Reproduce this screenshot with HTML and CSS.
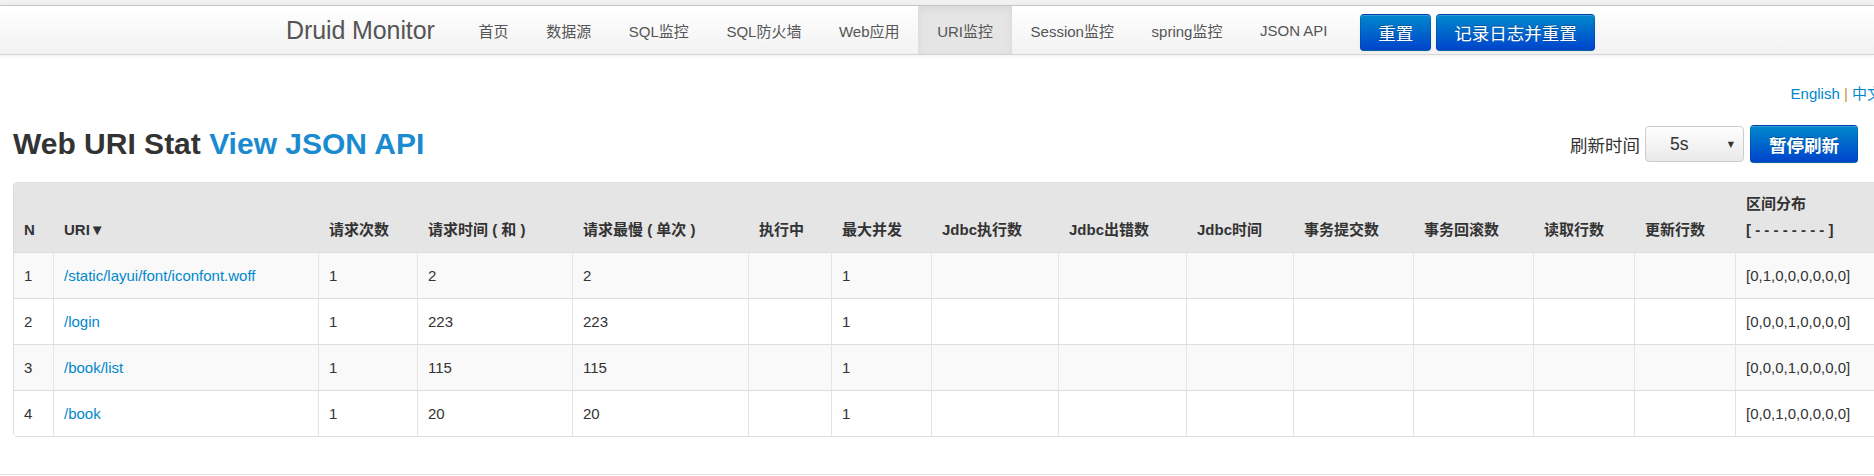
FILE: index.html
```html
<!DOCTYPE html>
<html lang="zh-CN">
<head>
<meta charset="utf-8">
<title>Druid Monitor - Web URI Stat</title>
<link rel="stylesheet" href="styles.css">
</head>
<body>
<div class="topstrip"></div>
<header class="navbar">
  <div class="nav-inner">
    <a class="brand" href="#">Druid Monitor</a>
    <nav class="nav">
      <a class="nav-link" href="#">首页</a>
      <a class="nav-link" href="#">数据源</a>
      <a class="nav-link" href="#">SQL监控</a>
      <a class="nav-link" href="#">SQL防火墙</a>
      <a class="nav-link" href="#">Web应用</a>
      <a class="nav-link active" href="#">URI监控</a>
      <a class="nav-link" href="#">Session监控</a>
      <a class="nav-link" href="#">spring监控</a>
      <a class="nav-link" href="#">JSON API</a>
    </nav>
    <div class="nav-buttons">
      <a class="btn btn-primary btn-nav" href="#">重置</a>
      <a class="btn btn-primary btn-nav" href="#">记录日志并重置</a>
    </div>
  </div>
</header>

<main class="main">
  <div class="lang"><a href="#">English</a> <span class="sep">|</span> <a href="#">中文</a></div>

  <div class="title-row">
    <h3 class="title">Web URI Stat <a href="#">View JSON API</a></h3>
    <div class="controls">
      <span class="label">刷新时间</span>
      <div class="select"><span class="select-value">5s</span><span class="select-arrow">▼</span></div>
      <a class="btn btn-primary btn-pause" href="#">暂停刷新</a>
    </div>
  </div>

  <table class="stat-table">
    <thead>
      <tr>
        <th class="c-n">N</th>
        <th class="c-uri">URI▼</th>
        <th class="c-req">请求次数</th>
        <th class="c-time">请求时间 ( 和 )</th>
        <th class="c-slow">请求最慢 ( 单次 )</th>
        <th class="c-run">执行中</th>
        <th class="c-conc">最大并发</th>
        <th class="c-jexec">Jdbc执行数</th>
        <th class="c-jerr">Jdbc出错数</th>
        <th class="c-jtime">Jdbc时间</th>
        <th class="c-commit">事务提交数</th>
        <th class="c-rollback">事务回滚数</th>
        <th class="c-read">读取行数</th>
        <th class="c-update">更新行数</th>
        <th class="c-hist">区间分布<br>[ - - - - - - - - ]</th>
      </tr>
    </thead>
    <tbody>
      <tr>
        <td>1</td><td><a href="#">/static/layui/font/iconfont.woff</a></td><td>1</td><td>2</td><td>2</td><td></td><td>1</td>
        <td></td><td></td><td></td><td></td><td></td><td></td><td></td><td>[0,1,0,0,0,0,0,0]</td>
      </tr>
      <tr>
        <td>2</td><td><a href="#">/login</a></td><td>1</td><td>223</td><td>223</td><td></td><td>1</td>
        <td></td><td></td><td></td><td></td><td></td><td></td><td></td><td>[0,0,0,1,0,0,0,0]</td>
      </tr>
      <tr>
        <td>3</td><td><a href="#">/book/list</a></td><td>1</td><td>115</td><td>115</td><td></td><td>1</td>
        <td></td><td></td><td></td><td></td><td></td><td></td><td></td><td>[0,0,0,1,0,0,0,0]</td>
      </tr>
      <tr>
        <td>4</td><td><a href="#">/book</a></td><td>1</td><td>20</td><td>20</td><td></td><td>1</td>
        <td></td><td></td><td></td><td></td><td></td><td></td><td></td><td>[0,0,1,0,0,0,0,0]</td>
      </tr>
    </tbody>
  </table>

  <div class="footer-rule"></div>
</main>
</body>
</html>
```

FILE: styles.css
```css
html, body {
  margin: 0;
  padding: 0;
  overflow: hidden;
  background: #ffffff;
}

body {
  font-family: "Liberation Sans", Arial, "Noto Sans CJK SC", "DejaVu Sans", sans-serif;
  font-size: 15px;
  color: #333333;
}

a {
  text-decoration: none;
  color: #0088cc;
}

.topstrip {
  height: 5px;
  background: #f1f1f1;
}

.navbar {
  border-top: 1px solid #c6c6c6;
  border-bottom: 1px solid #d4d4d4;
  background: linear-gradient(to bottom, #ffffff, #f2f2f2);
  box-shadow: 0 1px 4px rgba(0, 0, 0, 0.07);
  width: 1874px;
}

.nav-inner {
  display: flex;
  align-items: stretch;
  height: 48px;
  padding-left: 286px;
}

.brand {
  display: flex;
  align-items: center;
  font-size: 25px;
  color: #555555;
  padding-right: 25px;
  letter-spacing: -0.1px;
}

.nav {
  display: flex;
  align-items: stretch;
}

.nav-link {
  display: flex;
  align-items: center;
  padding: 0 18.8px;
  font-size: 15px;
  color: #555555;
}

.nav-link.active {
  background: #e5e5e5;
  box-shadow: inset 0 3px 8px rgba(0, 0, 0, 0.06);
}

.nav-buttons {
  display: flex;
  align-items: flex-start;
  gap: 5px;
  margin-left: 14px;
  padding-top: 8px;
}

.btn {
  display: inline-flex;
  align-items: center;
  justify-content: center;
  box-sizing: border-box;
  border-radius: 4px;
  font-size: 17.5px;
}

.btn-primary {
  color: #ffffff;
  background: linear-gradient(to bottom, #0088cc, #0044cc);
  border: 1px solid rgba(0, 0, 0, 0.12);
  border-bottom-color: rgba(0, 0, 0, 0.25);
  text-shadow: 0 -1px 0 rgba(0, 0, 0, 0.25);
  box-shadow: inset 0 1px 0 rgba(255, 255, 255, 0.2), 0 1px 2px rgba(0, 0, 0, 0.05);
}

.btn-nav {
  height: 37px;
  padding: 0 17px;
}

.main {
  width: 1874px;
  box-sizing: border-box;
  padding: 0 16px 0 13px;
}

.lang {
  margin-top: 29px;
  margin-right: -24px;
  text-align: right;
  font-size: 15px;
  line-height: 20px;
  white-space: nowrap;
}

.lang .sep {
  color: #c8913a;
}

.title-row {
  display: flex;
  justify-content: space-between;
  align-items: center;
  height: 40px;
  margin-top: 20px;
}

.title {
  margin: 0;
  font-size: 30px;
  font-weight: bold;
  line-height: 40px;
  color: #333333;
  white-space: nowrap;
}

.title a {
  color: #1a8bd0;
}

.controls {
  display: flex;
  align-items: center;
}

.label {
  font-size: 17.5px;
  color: #333333;
  margin-right: 5px;
}

.select {
  display: flex;
  align-items: center;
  justify-content: space-between;
  box-sizing: border-box;
  width: 99px;
  height: 36px;
  padding: 0 9px 0 24px;
  border: 1px solid #cccccc;
  border-radius: 4px;
  background: linear-gradient(to bottom, #ffffff, #e9e9e9);
  font-size: 17.5px;
  color: #333333;
}

.select-arrow {
  font-family: "DejaVu Sans", sans-serif;
  font-size: 8px;
  color: #333333;
}

.btn-pause {
  margin-left: 6px;
  height: 38px;
  width: 108px;
  font-weight: bold;
}

.stat-table {
  margin-top: 18px;
  border: 1px solid #dddddd;
  border-radius: 4px;
  border-collapse: separate;
  border-spacing: 0;
  table-layout: fixed;
  width: 1913px;
}

.stat-table th,
.stat-table td {
  box-sizing: border-box;
  text-align: left;
  font-size: 15px;
  border-left: 1px solid #e4e4e4;
  white-space: nowrap;
  overflow: hidden;
}

.stat-table th:first-child,
.stat-table td:first-child {
  border-left: none;
}

.stat-table th {
  background: #e5e5e5;
  font-weight: bold;
  color: #333333;
  line-height: 26px;
  padding: 8px 10px 9px;
  vertical-align: bottom;
}

.stat-table td {
  border-top: 1px solid #dcdcdc;
  line-height: 25px;
  padding: 10px;
  vertical-align: middle;
  color: #333333;
}

.stat-table tbody tr:nth-child(odd) td {
  background: #f9f9f9;
}

.stat-table tbody tr:nth-child(even) td {
  background: #ffffff;
}

.stat-table a {
  color: #0088cc;
}

.c-n { width: 39px; }
.c-uri { width: 265px; }
.c-req { width: 99px; }
.c-time { width: 155px; }
.c-slow { width: 176px; }
.c-run { width: 83px; }
.c-conc { width: 100px; }
.c-jexec { width: 127px; }
.c-jerr { width: 128px; }
.c-jtime { width: 107px; }
.c-commit { width: 120px; }
.c-rollback { width: 120px; }
.c-read { width: 101px; }
.c-update { width: 101px; }
.c-hist { width: 190px; }

.footer-rule {
  margin-top: 37px;
  margin-left: -13px;
  width: 1874px;
  border-top: 1px solid #e3e3e3;
}
```
